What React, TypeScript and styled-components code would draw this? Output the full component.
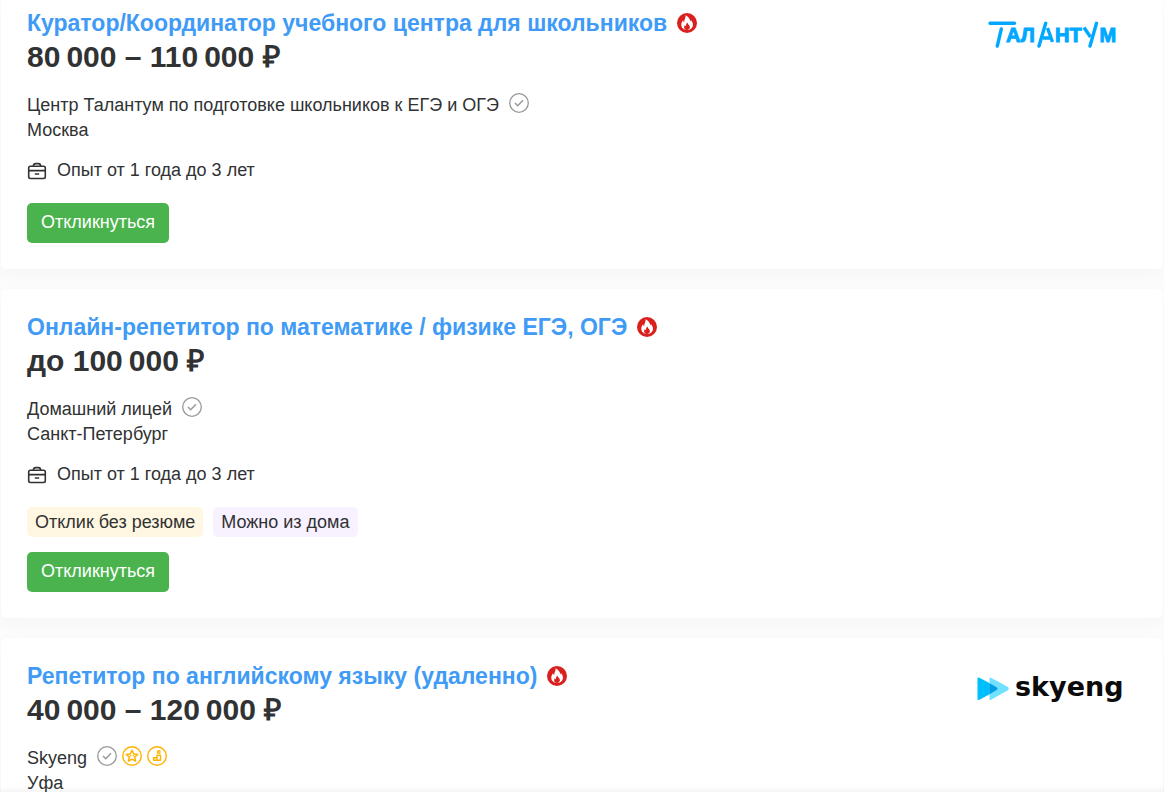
import React from "react";
import styled, { createGlobalStyle } from "styled-components";

const GlobalStyle = createGlobalStyle`
  *, *::before, *::after { box-sizing: border-box; }
  body {
    margin: 0;
    background: #fcfcfc;
    color: #303233;
    font-family: "Liberation Sans", Arial, sans-serif;
    font-size: 18px;
    line-height: 25px;
  }
`;

const Feed = styled.main`
  display: flex;
  flex-direction: column;
  gap: 20px;
  height: 100vh;
  padding: 0 1px;
  overflow: hidden;
`;

const Card = styled.article<{ $continued?: boolean }>`
  display: flex;
  flex-shrink: 0;
  justify-content: space-between;
  align-items: flex-start;
  gap: 24px;
  padding: ${(p) => (p.$continued ? "11px" : "26px")} 26px 26px;
  border-radius: ${(p) => (p.$continued ? "0 0 6px 6px" : "6px")};
  background: #fff;
  box-shadow: 0 4px 16px rgba(40, 70, 60, 0.04);
`;

const Details = styled.div`
  flex: 1;
  min-width: 0;
`;

const TitleRow = styled.h2`
  display: flex;
  align-items: center;
  gap: 10px;
  margin: 0;
  font-size: 23px;
  line-height: 24px;
`;

const TitleLink = styled.a`
  color: #3f9bf5;
  text-decoration: none;
`;

const Salary = styled.p`
  margin: 4px 0 18px;
  font-size: 30px;
  font-weight: 700;
  line-height: 36px;
`;

const CompanyRow = styled.div`
  display: flex;
  align-items: flex-start;
  gap: 10px;
`;

const CompanyLink = styled.a`
  color: inherit;
  text-decoration: none;
`;

const Badges = styled.span`
  display: flex;
  gap: 5px;
`;

const City = styled.div``;

const Experience = styled.div`
  display: flex;
  align-items: center;
  gap: 10px;
  margin: 15px 0 20px;
`;

const Tags = styled.ul`
  display: flex;
  flex-wrap: wrap;
  gap: 10px;
  margin: 0 0 15px;
  padding: 0;
  list-style: none;
`;

const Tag = styled.li<{ $tone: "cream" | "lilac" }>`
  padding: 3px 8px 2px;
  border-radius: 5px;
  background: ${(p) => (p.$tone === "cream" ? "#fff7e1" : "#f8f1ff")};
`;

const ApplyButton = styled.button`
  display: block;
  height: 40px;
  padding: 0 14px 2px;
  border: 0;
  border-radius: 5px;
  background: #4bb34e;
  color: #fff;
  font: inherit;
  cursor: pointer;
`;

const LogoBox = styled.div`
  display: flex;
  flex-shrink: 0;
  justify-content: center;
  align-items: center;
  width: 150px;
  height: 48px;
  margin-right: 10px;
`;

const BottomShade = styled.div`
  position: fixed;
  right: 0;
  bottom: 0;
  left: 0;
  height: 6px;
  background: linear-gradient(rgba(0, 0, 0, 0), rgba(0, 0, 0, 0.04));
`;

const Icon = styled.svg`
  display: block;
  flex-shrink: 0;
  width: 20px;
  height: 20px;
`;

const FireIcon = () => (
  <Icon viewBox="0 0 20 20" aria-hidden="true">
    <circle cx="10" cy="10" r="10" fill="#d9201f" />
    <path
      d="M8.600 2.200c2.900 1.300 4.500 3.700 4.600 6.200.4-.3.600-.8.700-1.300 1.500 1.700 2.300 3.500 2 5.400-.4 2.600-2.700 4.500-5.700 4.500-3.200 0-5.600-2-5.900-4.700-.2-2 .8-3.600 1.700-5 .3 1 .6 1.600 1.200 1.900C6.900 6.700 9 4.900 8.600 2.200z"
      fill="#fff"
    />
    <path
      d="M10.400 9.400c.1 1.700 2.500 2.600 2.500 4.700 0 1.600-1.200 2.900-2.900 2.900s-2.900-1.200-2.900-2.700c0-.9.4-1.500.8-2 .2.600.5.900.9 1 0-1.600.5-2.900 1.600-3.900z"
      fill="#d9201f"
    />
  </Icon>
);

const CheckBadge = () => (
  <Icon viewBox="0 0 20 20" fill="none" stroke="#999" role="img" aria-label="Проверенная компания">
    <circle cx="10" cy="10" r="9.300" strokeWidth="1.300" />
    <path d="M6 10l2.700 2.700L14 7.300" strokeWidth="1.500" />
  </Icon>
);

const StarBadge = () => (
  <Icon viewBox="0 0 20 20" fill="none" stroke="#fdb300" role="img" aria-label="Рейтинг">
    <circle cx="10" cy="10" r="9.300" strokeWidth="1.400" />
    <path
      d="M10 4.300l1.700 3.600 4 .5-3 2.700.8 4L10 13.200l-3.500 1.900.8-4-3-2.700 4-.5z"
      strokeWidth="1.500"
      strokeLinejoin="round"
    />
    <path d="M8.600 9v1.600M11.400 9v1.600" strokeWidth="1.200" />
  </Icon>
);

const PodiumBadge = () => (
  <Icon viewBox="0 0 20 20" fill="none" stroke="#fdb300" role="img" aria-label="Лучший работодатель">
    <circle cx="10" cy="10" r="9.300" strokeWidth="1.400" />
    <circle cx="11.700" cy="6" r="1.300" strokeWidth="1.400" />
    <path d="M10 14.300V9.300h3.500v5H6.600v-2.600H10" strokeWidth="1.400" strokeLinejoin="round" />
  </Icon>
);

const BriefcaseIcon = () => (
  <Icon viewBox="0 0 20 20" fill="none" stroke="#303233" strokeWidth="1.600" aria-hidden="true">
    <rect x="1.700" y="5.200" width="16.600" height="12.300" rx="1.700" />
    <path d="M6.300 5c.2-1.500.9-2.400 2.200-2.400h3c1.300 0 2 .9 2.200 2.400M1.700 9.600h16.600M7.800 13h4.400" />
  </Icon>
);

const TalantumLogo = () => (
  <svg width="132" height="32" viewBox="0 0 132 32" role="img" aria-label="Талантум">
    <g stroke="#00a9ff" strokeWidth="3.400" strokeLinecap="round">
      <path d="M4 4.300h24.500M15.300 10L11.300 27M59.700 4.300L53 27M110.500 4.300L104 27" />
    </g>
    <g
      fill="#00a9ff"
      fontFamily="'Liberation Sans', Arial, sans-serif"
      fontWeight="700"
      fontSize="20"
      stroke="#00a9ff"
      strokeWidth="1"
    >
      <text x="20" y="23">АЛ</text>
      <text x="69" y="23">НТ</text>
      <text x="113.500" y="23">М</text>
    </g>
    <path d="M61.500 9l5 14M57 19h7M98 8.500l6.500 9.500" stroke="#00a9ff" strokeWidth="3.400" fill="none" />
  </svg>
);

const SkyengLogo = () => (
  <svg width="150" height="42" viewBox="0 0 150 42" role="img" aria-label="Skyeng">
    <path d="M1.500 11.500L19 20.700q1.500 1 0 2L1.500 32z" fill="#00bfff" stroke="#00bfff" strokeWidth="2" strokeLinejoin="round" />
    <path d="M13.500 11.500L30 20.700q1.500 1 0 2L13.500 32z" fill="#70e1ff" stroke="#70e1ff" strokeWidth="2" strokeLinejoin="round" />
    <path d="M12.500 16.200L19.500 20.300q2 1.400 0 2.800L12.500 27.200z" fill="#009be5" />
    <text x="38" y="29" fill="#0b0b0b" fontFamily="'DejaVu Sans', sans-serif" fontWeight="700" fontSize="27">
      skyeng
    </text>
  </svg>
);

type Vacancy = {
  title: string;
  salary: string;
  company: string;
  city: string;
  rated?: boolean;
  tags: { label: string; tone: "cream" | "lilac" }[];
  Logo?: React.ComponentType;
};

const vacancies: Vacancy[] = [
  {
    title: "Куратор/Координатор учебного центра для школьников",
    salary: "80\u202f000 – 110\u202f000 ₽",
    company: "Центр Талантум по подготовке школьников к ЕГЭ и ОГЭ",
    city: "Москва",
    tags: [],
    Logo: TalantumLogo,
  },
  {
    title: "Онлайн-репетитор по математике / физике ЕГЭ, ОГЭ",
    salary: "до 100\u202f000 ₽",
    company: "Домашний лицей",
    city: "Санкт-Петербург",
    tags: [
      { label: "Отклик без резюме", tone: "cream" },
      { label: "Можно из дома", tone: "lilac" },
    ],
  },
  {
    title: "Репетитор по английскому языку (удаленно)",
    salary: "40\u202f000 – 120\u202f000 ₽",
    company: "Skyeng",
    city: "Уфа",
    rated: true,
    tags: [],
    Logo: SkyengLogo,
  },
];

const VacancyCard = ({ vacancy, continued }: { vacancy: Vacancy; continued: boolean }) => {
  const { title, salary, company, city, rated, tags, Logo } = vacancy;
  return (
    <Card $continued={continued}>
      <Details>
        <TitleRow>
          <TitleLink href="#">{title}</TitleLink>
          <FireIcon />
        </TitleRow>
        <Salary>{salary}</Salary>
        <CompanyRow>
          <CompanyLink href="#">{company}</CompanyLink>
          <Badges>
            <CheckBadge />
            {rated && <StarBadge />}
            {rated && <PodiumBadge />}
          </Badges>
        </CompanyRow>
        <City>{city}</City>
        {!rated && (
          <>
            <Experience>
              <BriefcaseIcon />
              Опыт от 1 года до 3 лет
            </Experience>
            {tags.length > 0 && (
              <Tags>
                {tags.map((tag) => (
                  <Tag key={tag.label} $tone={tag.tone}>
                    {tag.label}
                  </Tag>
                ))}
              </Tags>
            )}
            <ApplyButton type="button">Откликнуться</ApplyButton>
          </>
        )}
      </Details>
      {Logo && (
        <LogoBox>
          <Logo />
        </LogoBox>
      )}
    </Card>
  );
};

export default function App() {
  return (
    <>
      <GlobalStyle />
      <Feed>
        {vacancies.map((vacancy, index) => (
          <VacancyCard key={vacancy.title} vacancy={vacancy} continued={index === 0} />
        ))}
      </Feed>
      <BottomShade />
    </>
  );
}
